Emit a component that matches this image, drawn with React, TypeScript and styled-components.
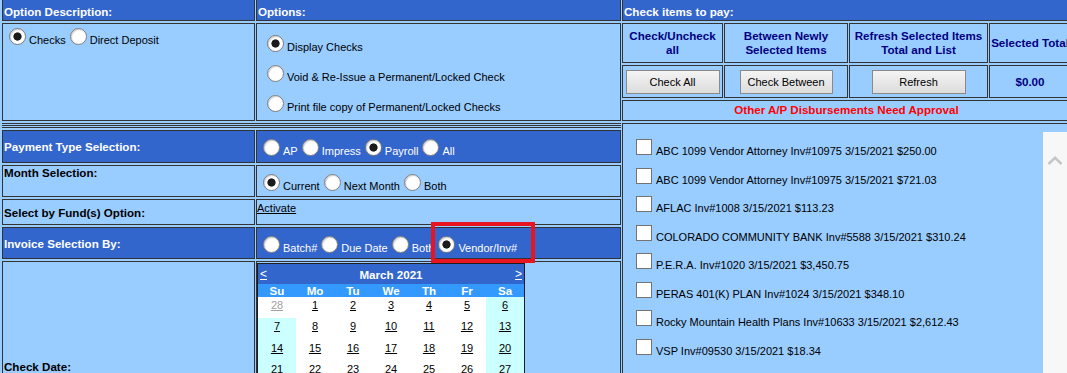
import React from 'react';
import styled, { createGlobalStyle } from 'styled-components';

const GlobalStyle = createGlobalStyle`
  html, body {
    margin: 0;
    padding: 0;
    background: #99ccff;
    overflow: hidden;
  }
  body {
    font-family: "Liberation Sans", Arial, sans-serif;
    font-size: 11px;
    color: #000;
  }
`;

const BLUE = '#3366cc';
const LIGHT = '#99ccff';
const EDGE = '#333333';
const NAVY = '#000080';

type Tone = 'dark' | 'light';

const Sheet = styled.div`
  display: flex;
  align-items: stretch;
  gap: 1px;
  padding-left: 2px;
  width: 1080px;
`;

const Form = styled.div`
  display: grid;
  grid-template-columns: 253px 365px;
  grid-template-rows: 21px 98px 5px 33px 32px 26px 32px 210px;
  column-gap: 1px;
  row-gap: 2px;
`;

const Checks = styled.div`
  display: grid;
  grid-template-columns: 101px 124px 139px 82px;
  grid-template-rows: 21px 40px 33px 21px 1fr;
  column-gap: 1px;
  row-gap: 2px;
`;

const Cell = styled.div<{ $tone?: Tone }>`
  box-sizing: border-box;
  min-width: 0;
  border: 1px solid ${EDGE};
  background: ${({ $tone }) => ($tone === 'dark' ? BLUE : LIGHT)};
  color: ${({ $tone }) => ($tone === 'dark' ? '#fff' : '#000')};
`;

const Heading = styled(Cell)<{ $span?: boolean }>`
  border-top: 0;
  padding: 3px 1px 0;
  display: flex;
  align-items: center;
  font-weight: bold;
  font-size: 11.6px;
  line-height: 13px;
  white-space: nowrap;
  ${({ $span }) => $span && 'grid-column: 1 / -1;'}
`;

const Label = styled(Cell)<{ $valign?: 'top' | 'center' }>`
  display: flex;
  align-items: ${({ $valign }) => ($valign === 'top' ? 'flex-start' : 'center')};
  padding: 0 1px;
  font-weight: bold;
  font-size: 11.6px;
  line-height: 13px;
  white-space: nowrap;
`;

const ChoiceCell = styled(Cell)<{ $pad?: number }>`
  position: relative;
  padding: ${({ $pad }) => $pad ?? 8}px 6px 0;
  line-height: 16px;
  white-space: nowrap;
`;

const OptionList = styled(Cell)`
  display: flex;
  flex-direction: column;
  gap: 9.8px;
  padding: 11px 10px 0;
  line-height: 16px;
  white-space: nowrap;
`;

const Divider = styled.div`
  grid-column: 1 / -1;
  border-top: 1px solid ${EDGE};
  border-bottom: 1px solid ${EDGE};
  background: linear-gradient(${LIGHT} 0 1px, ${EDGE} 1px 2px, ${LIGHT} 2px);
`;

const Choice = styled.span`
  & + & {
    margin-left: 4px;
  }
`;

const Radio = styled.span<{ $on?: boolean }>`
  display: inline-block;
  width: 17px;
  height: 17px;
  box-sizing: border-box;
  margin: 0 3px -1px 0;
  border-radius: 50%;
  border: 1px solid #7d7d7d;
  background: ${({ $on }) =>
    $on ? 'radial-gradient(circle, #1c1c1c 0 3.7px, #ffffff 4.5px)' : '#ffffff'};
  box-shadow: inset 1px 1px 1px rgba(0, 0, 0, 0.18);
`;

const LinkText = styled.span`
  color: #000;
  text-decoration: underline;
`;

const FundCell = styled(Cell)`
  padding: 2px 0 0;
  line-height: 13px;
`;

const Marker = styled.div`
  position: absolute;
  left: 174px;
  top: -6px;
  width: 104px;
  height: 41px;
  box-sizing: border-box;
  border: 4px solid #e8141f;
  z-index: 2;
`;

const CalendarCell = styled(Cell)`
  padding-top: 1px;
`;

const Calendar = styled.div`
  width: 268px;
  box-sizing: border-box;
  border: 1px solid #1e1e1e;
  background: #fff;
`;

const CalTitle = styled.div`
  height: 20px;
  background: ${BLUE};
  color: #fff;
  display: flex;
  align-items: center;
  justify-content: space-between;
  padding: 0 2px;
  font-weight: bold;
  font-size: 11.6px;
`;

const CalNav = styled.span`
  font-weight: normal;
  font-size: 12px;
  text-decoration: underline;
`;

const CalGrid = styled.div`
  display: grid;
  grid-template-columns: repeat(7, 38px);
  grid-template-rows: 13px repeat(6, 21.4px);
`;

const DayName = styled.div`
  background: #3399ff;
  color: #fff;
  font-weight: bold;
  font-size: 11.6px;
  line-height: 13px;
  text-align: center;
`;

const Day = styled.div<{ $weekend?: boolean; $other?: boolean }>`
  background: ${({ $weekend, $other }) => ($weekend && !$other ? '#ccffff' : '#ffffff')};
  color: ${({ $other }) => ($other ? '#a0a0a0' : '#000')};
  text-align: center;
  padding-top: 2px;
  line-height: 13px;
  text-decoration: underline;
`;

const NoteCell = styled(Cell)`
  display: flex;
  align-items: center;
  justify-content: center;
  text-align: center;
  color: ${NAVY};
  font-weight: bold;
  font-size: 11.6px;
  line-height: 14px;
  white-space: nowrap;
`;

const ButtonCell = styled(Cell)`
  display: flex;
  align-items: center;
  justify-content: center;
`;

const Button = styled.button<{ $w?: number }>`
  width: ${({ $w }) => $w ?? 94}px;
  height: 24px;
  padding: 0;
  font: 11px "Liberation Sans", Arial, sans-serif;
  color: #000;
  background: linear-gradient(#f4f4f4, #dcdcdc);
  border: 1px solid #8a8a8a;
  border-radius: 0;
`;

const Warning = styled(Cell)`
  grid-column: 1 / -1;
  text-align: center;
  color: #ff0000;
  font-weight: bold;
  font-size: 11.6px;
  line-height: 18px;
  white-space: nowrap;
`;

const ListCell = styled(Cell)`
  grid-column: 1 / -1;
  display: flex;
  padding-right: 3px;
`;

const Items = styled.div`
  flex: 1;
  display: flex;
  flex-direction: column;
  gap: 8.5px;
  padding: 15px 0 0 13px;
  line-height: 16px;
  white-space: nowrap;
`;

const Box = styled.span`
  display: inline-block;
  width: 16px;
  height: 16px;
  box-sizing: border-box;
  margin-right: 4px;
  border: 1px solid #737373;
  background: #fff;
`;

const Track = styled.div`
  width: 24px;
  margin-top: 8px;
  background: #f7f7f7;
  display: flex;
  justify-content: center;
  align-items: flex-start;
  svg {
    margin-top: 24px;
  }
`;

const payees = [
  'ABC 1099 Vendor Attorney Inv#10975 3/15/2021 $250.00',
  'ABC 1099 Vendor Attorney Inv#10975 3/15/2021 $721.03',
  'AFLAC Inv#1008 3/15/2021 $113.23',
  'COLORADO COMMUNITY BANK Inv#5588 3/15/2021 $310.24',
  'P.E.R.A. Inv#1020 3/15/2021 $3,450.75',
  'PERAS 401(K) PLAN Inv#1024 3/15/2021 $348.10',
  'Rocky Mountain Health Plans Inv#10633 3/15/2021 $2,612.43',
  'VSP Inv#09530 3/15/2021 $18.34',
];

const dayNames = ['Su', 'Mo', 'Tu', 'We', 'Th', 'Fr', 'Sa'];

// March 2021 starts on a Monday; grid opens with Feb 28
const days = Array.from({ length: 42 }, (_, i) => {
  const n = i - 1;
  if (n < 0) return { label: 28, other: true };
  if (n >= 31) return { label: n - 30, other: true };
  return { label: n + 1, other: false };
});

function Options({ items }: { items: { text: string; on?: boolean }[] }) {
  return (
    <>
      {items.map((o) => (
        <Choice key={o.text}>
          <Radio $on={o.on} />
          {o.text}
        </Choice>
      ))}
    </>
  );
}

function MonthCalendar() {
  return (
    <Calendar>
      <CalTitle>
        <CalNav>&lt;</CalNav>
        March 2021
        <CalNav>&gt;</CalNav>
      </CalTitle>
      <CalGrid>
        {dayNames.map((d) => (
          <DayName key={d}>{d}</DayName>
        ))}
        {days.map((d, i) => (
          <Day key={i} $weekend={i % 7 === 0 || i % 7 === 6} $other={d.other}>
            {d.label}
          </Day>
        ))}
      </CalGrid>
    </Calendar>
  );
}

export default function App() {
  return (
    <>
      <GlobalStyle />
      <Sheet>
        <Form>
          <Heading $tone="dark">Option Description:</Heading>
          <Heading $tone="dark">Options:</Heading>

          <ChoiceCell $pad={4}>
            <Options items={[{ text: 'Checks', on: true }, { text: 'Direct Deposit' }]} />
          </ChoiceCell>
          <OptionList>
            <div>
              <Radio $on />
              Display Checks
            </div>
            <div>
              <Radio />
              Void &amp; Re-Issue a Permanent/Locked Check
            </div>
            <div>
              <Radio />
              Print file copy of Permanent/Locked Checks
            </div>
          </OptionList>

          <Divider />

          <Label $tone="dark">Payment Type Selection:</Label>
          <ChoiceCell $tone="dark">
            <Options
              items={[{ text: 'AP' }, { text: 'Impress' }, { text: 'Payroll', on: true }, { text: 'All' }]}
            />
          </ChoiceCell>

          <Label $valign="top">Month Selection:</Label>
          <ChoiceCell>
            <Options items={[{ text: 'Current', on: true }, { text: 'Next Month' }, { text: 'Both' }]} />
          </ChoiceCell>

          <Label>Select by Fund(s) Option:</Label>
          <FundCell>
            <LinkText>Activate</LinkText>
          </FundCell>

          <Label $tone="dark">Invoice Selection By:</Label>
          <ChoiceCell $tone="dark">
            <Options
              items={[{ text: 'Batch#' }, { text: 'Due Date' }, { text: 'Both' }, { text: 'Vendor/Inv#', on: true }]}
            />
            <Marker />
          </ChoiceCell>

          <Label>Check Date:</Label>
          <CalendarCell>
            <MonthCalendar />
          </CalendarCell>
        </Form>

        <Checks>
          <Heading $tone="dark" $span>
            Check items to pay:
          </Heading>

          <NoteCell>
            Check/Uncheck
            <br />
            all
          </NoteCell>
          <NoteCell>
            Between Newly
            <br />
            Selected Items
          </NoteCell>
          <NoteCell>
            Refresh Selected Items
            <br />
            Total and List
          </NoteCell>
          <NoteCell>Selected Total</NoteCell>

          <ButtonCell>
            <Button>Check All</Button>
          </ButtonCell>
          <ButtonCell>
            <Button $w={93}>Check Between</Button>
          </ButtonCell>
          <ButtonCell>
            <Button>Refresh</Button>
          </ButtonCell>
          <NoteCell>$0.00</NoteCell>

          <Warning>Other A/P Disbursements Need Approval</Warning>

          <ListCell>
            <Items>
              {payees.map((p, i) => (
                <div key={i}>
                  <Box />
                  {p}
                </div>
              ))}
            </Items>
            <Track>
              <svg width="16" height="9" viewBox="0 0 16 9">
                <polyline points="1.5,8 8,1.8 14.5,8" fill="none" stroke="#c6c6c6" strokeWidth="2.6" />
              </svg>
            </Track>
          </ListCell>
        </Checks>
      </Sheet>
    </>
  );
}
